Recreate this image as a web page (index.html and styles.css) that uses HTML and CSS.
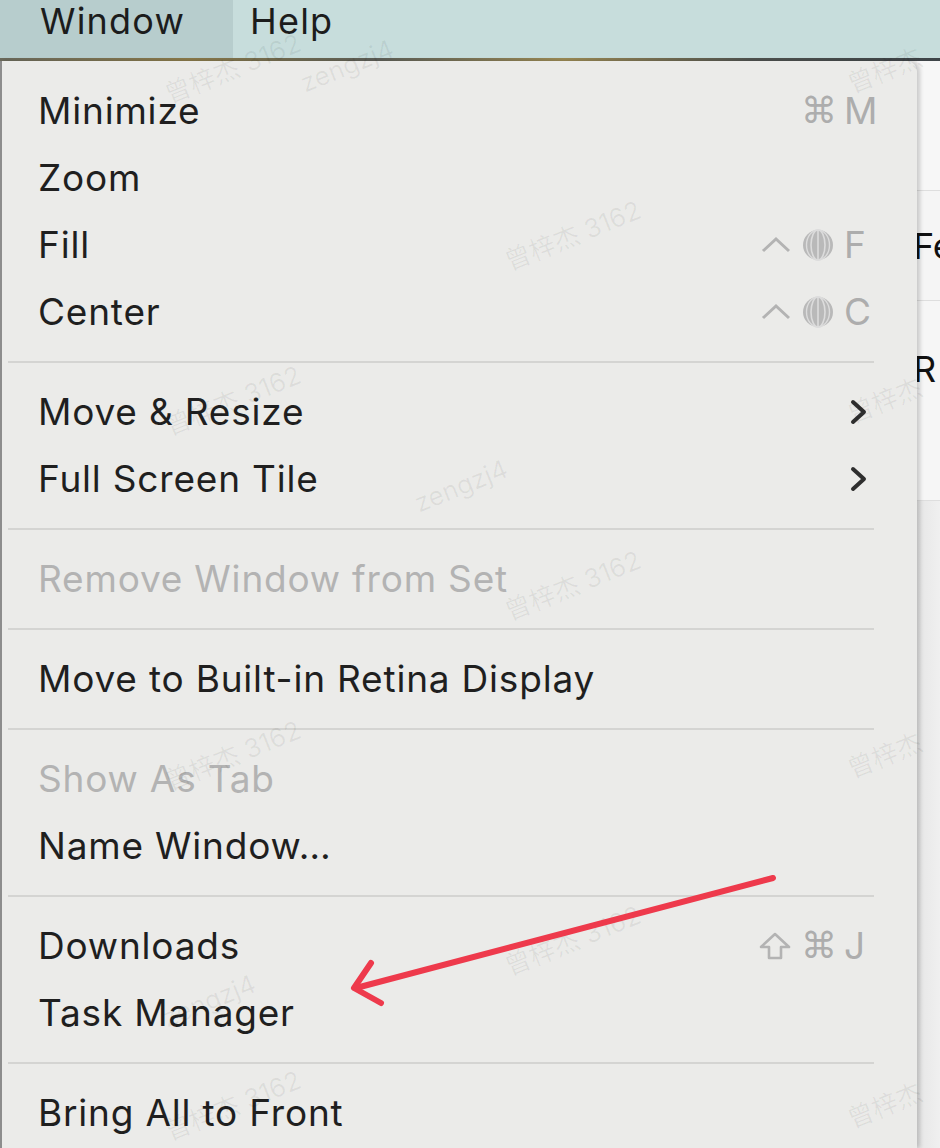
FILE: index.html
```html
<!DOCTYPE html>
<html>
<head>
<meta charset="utf-8">
<link rel="stylesheet" href="styles.css">
</head>
<body>
<div class="screen">
  <div class="menubar">
    <div class="mb-item active">Window</div>
    <div class="mb-item">Help</div>
  </div>
  <div class="strip"></div>
  <div class="stage">
    <div class="menu">
      <div class="row"><span class="label">Minimize</span><span class="keys"><span class="mod">⌘</span><span class="key">M</span></span></div>
      <div class="row"><span class="label">Zoom</span></div>
      <div class="row"><span class="label">Fill</span><span class="keys">
        <svg class="mod-svg" width="32" height="20" viewBox="0 0 32 20"><polyline points="3,16 16,4 29,16" fill="none" stroke="#b3b3b3" stroke-width="3"/></svg>
        <svg class="mod-svg" width="34" height="34" viewBox="0 0 34 34"><circle cx="17" cy="17" r="15" fill="#b9b9b9"/><ellipse cx="17" cy="17" rx="7" ry="15" fill="none" stroke="#dcdcdc" stroke-width="1.6"/><ellipse cx="17" cy="17" rx="11.5" ry="15" fill="none" stroke="#dcdcdc" stroke-width="1.4"/><line x1="17" y1="2" x2="17" y2="32" stroke="#dcdcdc" stroke-width="1.6"/></svg>
        <span class="key">F</span></span></div>
      <div class="row"><span class="label">Center</span><span class="keys">
        <svg class="mod-svg" width="32" height="20" viewBox="0 0 32 20"><polyline points="3,16 16,4 29,16" fill="none" stroke="#b3b3b3" stroke-width="3"/></svg>
        <svg class="mod-svg" width="34" height="34" viewBox="0 0 34 34"><circle cx="17" cy="17" r="15" fill="#b9b9b9"/><ellipse cx="17" cy="17" rx="7" ry="15" fill="none" stroke="#dcdcdc" stroke-width="1.6"/><ellipse cx="17" cy="17" rx="11.5" ry="15" fill="none" stroke="#dcdcdc" stroke-width="1.4"/><line x1="17" y1="2" x2="17" y2="32" stroke="#dcdcdc" stroke-width="1.6"/></svg>
        <span class="key">C</span></span></div>
      <div class="sep"></div>
      <div class="row"><span class="label">Move &amp; Resize</span><svg class="chev" width="18" height="26" viewBox="0 0 18 26"><polyline points="3,3 14,13 3,23" fill="none" stroke="#2e2e2e" stroke-width="4" stroke-linecap="round" stroke-linejoin="round"/></svg></div>
      <div class="row"><span class="label">Full Screen Tile</span><svg class="chev" width="18" height="26" viewBox="0 0 18 26"><polyline points="3,3 14,13 3,23" fill="none" stroke="#2e2e2e" stroke-width="4" stroke-linecap="round" stroke-linejoin="round"/></svg></div>
      <div class="sep"></div>
      <div class="row disabled"><span class="label">Remove Window from Set</span></div>
      <div class="sep"></div>
      <div class="row"><span class="label">Move to Built-in Retina Display</span></div>
      <div class="sep"></div>
      <div class="row disabled"><span class="label">Show As Tab</span></div>
      <div class="row"><span class="label">Name Window…</span></div>
      <div class="sep"></div>
      <div class="row"><span class="label">Downloads</span><span class="keys">
        <svg class="mod-svg" width="34" height="30" viewBox="0 0 34 30"><path d="M17 3 L31 16 L23 16 L23 27 L11 27 L11 16 L3 16 Z" fill="none" stroke="#b3b3b3" stroke-width="2.6" stroke-linejoin="round"/></svg>
        <span class="mod">⌘</span><span class="key">J</span></span></div>
      <div class="row"><span class="label">Task Manager</span></div>
      <div class="sep"></div>
      <div class="row"><span class="label">Bring All to Front</span></div>
    </div>
    <div class="bgwin">
      <div class="bw-band top"></div>
      <div class="bw-band mid"><span class="bw-text">Fe</span></div>
      <div class="bw-band low"><span class="bw-text">R</span></div>
      <div class="bw-rest"></div>
    </div>
  </div>

  <svg class="arrow" width="940" height="1148" viewBox="0 0 940 1148">
    <g fill="none" stroke="#ee3a4c" stroke-width="6" stroke-linecap="round" stroke-linejoin="round">
      <line x1="773" y1="878" x2="356" y2="988"/>
      <polyline points="371,963 354,988 381,1003"/>
    </g>
  </svg>

  <div class="watermarks">
    <span class="wm" style="left:160px;top:48px">曾梓杰 3162</span>
    <span class="wm" style="left:298px;top:50px">zengzj4</span>
    <span class="wm" style="left:845px;top:50px">曾梓杰</span>
    <span class="wm" style="left:500px;top:215px">曾梓杰 3162</span>
    <span class="wm" style="left:160px;top:380px">曾梓杰 3162</span>
    <span class="wm" style="left:845px;top:380px">曾梓杰</span>
    <span class="wm" style="left:412px;top:470px">zengzj4</span>
    <span class="wm" style="left:500px;top:565px">曾梓杰 3162</span>
    <span class="wm" style="left:160px;top:735px">曾梓杰 3162</span>
    <span class="wm" style="left:845px;top:735px">曾梓杰</span>
    <span class="wm" style="left:500px;top:920px">曾梓杰 3162</span>
    <span class="wm" style="left:160px;top:985px">zengzj4</span>
    <span class="wm" style="left:160px;top:1085px">曾梓杰 3162</span>
    <span class="wm" style="left:845px;top:1085px">曾梓杰</span>
  </div>
</div>
</body>
</html>
```
FILE: styles.css
```css
* { box-sizing: border-box; }
html, body { margin: 0; padding: 0; }
body {
  width: 940px;
  height: 1148px;
  overflow: hidden;
  background: #f2f2f1;
  font-family: "Inter", "Liberation Sans", "Noto Sans CJK SC", sans-serif;
}
.screen {
  position: relative;
  width: 940px;
  height: 1148px;
  display: flex;
  flex-direction: column;
}
.menubar {
  height: 58px;
  flex: none;
  display: flex;
  background: #c7dddc;
  font-size: 36px;
  letter-spacing: 1.2px;
  color: #1c1c1c;
}
.mb-item {
  display: flex;
  align-items: center;
  padding: 0 20px 16px 17px;
}
.mb-item.active {
  width: 233px;
  padding-left: 40px;
  background: #b7cdcd;
}
.strip {
  height: 3px;
  flex: none;
  background: linear-gradient(90deg, #6b6a5c 0%, #8a7a4a 20%, #5d5f58 40%, #9b8a55 60%, #4f524f 80%, #3e4448 100%);
}
.stage {
  flex: 1;
  display: flex;
  min-height: 0;
}
.menu {
  width: 917px;
  flex: none;
  background: #ebebe9;
  border-left: 2px solid #8d8d8d;
  border-top-right-radius: 10px;
  padding-top: 16px;
  box-shadow: 3px 0 4px rgba(0,0,0,0.18);
  position: relative;
  z-index: 1;
  font-size: 37px;
  color: #1f1f1f;
}
.row {
  height: 67px;
  display: flex;
  align-items: center;
  padding: 0 39px 0 36px;
}
.label { flex: 1; white-space: nowrap; letter-spacing: 0.8px; }
.row.disabled .label { color: #b3b3b3; }
.keys {
  display: flex;
  align-items: center;
  gap: 9px;
  color: #adadad;
}
.mod {
  font-family: "DejaVu Sans", sans-serif;
  font-size: 36px;
  width: 34px;
  text-align: center;
}
.mod-svg { display: block; }
.key {
  width: 34px;
  font-size: 37px;
}
.chev { display: block; margin-right: 10px; }
.sep {
  height: 33px;
  display: flex;
  align-items: center;
  padding: 0 43px 0 6px;
}
.sep::before {
  content: "";
  flex: 1;
  height: 2px;
  background: #d4d4d2;
}
.bgwin {
  flex: 1;
  display: flex;
  flex-direction: column;
  background: #f3f3f3;
  font-size: 36px;
  color: #111;
}
.bw-band { flex: none; border-bottom: 1px solid #dedede; overflow: hidden; }
.bw-band.top { height: 130px; background: #f7f7f7; }
.bw-band.mid { height: 110px; display: flex; align-items: center; background: #f5f5f5; }
.bw-band.low { height: 200px; display: flex; align-items: flex-start; padding-top: 50px; background: #f6f6f6; }
.bw-text { margin-left: -4px; line-height: 1; }
.bw-rest { flex: 1; background: linear-gradient(90deg, #e6e6e6, #f6f6f6); }
.arrow {
  position: absolute;
  left: 0;
  top: 0;
  z-index: 3;
  pointer-events: none;
}
.watermarks {
  position: absolute;
  inset: 0;
  z-index: 2;
  pointer-events: none;
}
.wm {
  position: absolute;
  font-size: 26px;
  color: rgba(0,0,0,0.06);
  transform: rotate(-22deg);
  white-space: nowrap;
}
```
